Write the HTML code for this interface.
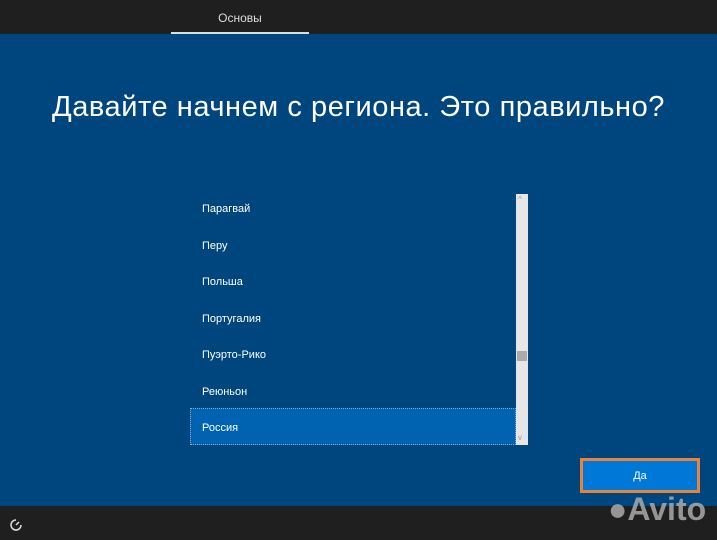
<!DOCTYPE html>
<html><head><meta charset="utf-8"><style>
*{margin:0;padding:0;box-sizing:border-box}
body{width:717px;height:540px;overflow:hidden;background:#00467e;font-family:"Liberation Sans","DejaVu Sans",sans-serif;position:relative;color:#fff}
.top{position:absolute;left:0;top:0;width:717px;height:34px;background:#1f1f1f}
.tab{position:absolute;left:171px;top:11px;width:138px;text-align:center;font-size:12px;color:#ddd}
.ul{position:absolute;left:171px;top:32px;width:138px;height:2px;background:#ddd}
.bot{position:absolute;left:0;top:506px;width:717px;height:34px;background:#1f1f1f}
h1{position:absolute;left:0;top:91px;width:717px;text-align:center;font-weight:300;font-size:29px;color:#fff;letter-spacing:0.55px}
.item{position:absolute;left:202px;font-size:11px;color:#fff}
.sel{position:absolute;left:190px;top:408px;width:326px;height:37px;background:#0063b1;border:1px dotted #8ab}
.sb{position:absolute;left:516px;top:194px;width:12px;height:251px;background:#e6e6e6}
.thumb{position:absolute;left:517px;top:351px;width:10px;height:10px;background:#aaa}
.btn{position:absolute;left:580px;top:458px;width:120px;height:35px;border:3px solid #e8833a;background:#0078d7;text-align:center;font-size:11px;line-height:31px}
</style></head><body>
<div class="top"><div class="tab">Основы</div><div class="ul"></div></div>
<h1>Давайте начнем с региона. Это правильно?</h1>
<div class="sel"></div>
<div class="item" style="top:203px">Парагвай</div>
<div class="item" style="top:240px">Перу</div>
<div class="item" style="top:276px">Польша</div>
<div class="item" style="top:313px">Португалия</div>
<div class="item" style="top:349px">Пуэрто-Рико</div>
<div class="item" style="top:386px">Реюньон</div>
<div class="item" style="top:422px">Россия</div>
<div class="sb"></div><div class="thumb"></div>
<div style="position:absolute;left:518px;top:195px;font-size:8px;color:#999">^</div>
<div style="position:absolute;left:518px;top:433px;font-size:8px;color:#999">v</div>
<div class="btn">Да</div>
<div class="bot">
<svg style="position:absolute;left:9px;top:12px" width="14" height="14" viewBox="0 0 14 14"><path d="M7 2a5 5 0 1 0 5 5" stroke="#ddd" stroke-width="1.5" fill="none"/><path d="M7 7l3-3" stroke="#ddd" stroke-width="1.5"/></svg>
<div style="position:absolute;left:608px;top:-15px;font-size:32px;font-weight:bold;color:#aaa;opacity:.85">●Avito</div>
</div>
</body></html>
